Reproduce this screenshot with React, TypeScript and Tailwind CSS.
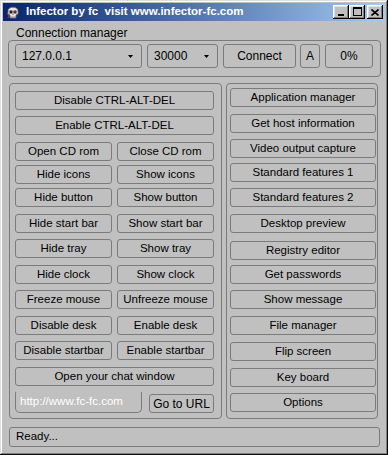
import React from "react";

const btn =
  "flex items-center justify-center h-[19px] border border-[#7b7b7b] rounded-[3px] text-black leading-none";

function Skull() {
  return (
    <svg width="16" height="16" viewBox="0 0 16 16">
      <path d="M3 7 C3 2 13 2 13 7 L13 10 L11 11 L11 14 L5 14 L5 11 L3 10 Z" fill="#e8e8e8" stroke="#6a6a6a" strokeWidth="0.8" />
      <rect x="4.5" y="6.5" width="3" height="3" fill="#202020" />
      <rect x="8.5" y="6.5" width="3" height="3" fill="#202020" />
      <rect x="9" y="7" width="1.5" height="1.5" fill="#c03020" />
      <path d="M7.5 10 L8.5 10 L8 11.5 Z" fill="#202020" />
      <path d="M6 12 L6 14 M8 12 L8 14 M10 12 L10 14" stroke="#707070" strokeWidth="0.7" />
      <path d="M2 9 L4 12 L3 14" stroke="#b04020" strokeWidth="1" fill="none" />
    </svg>
  );
}

function CaptionButton({ children, className = "" }: { children: React.ReactNode; className?: string }) {
  return (
    <div
      className={`w-[16px] h-[14px] bg-[#c0c0c0] flex items-center justify-center shadow-[inset_-1px_-1px_#000,inset_1px_1px_#fff,inset_-2px_-2px_#808080,inset_2px_2px_#dfdfdf] ${className}`}
    >
      {children}
    </div>
  );
}

function Combo({ text, w }: { text: string; w: string }) {
  return (
    <div className={`${w} h-[24px] border border-[#7b7b7b] rounded-[3px] flex items-center pl-[6px] pr-[8px]`}>
      <span className="flex-1">{text}</span>
      <svg width="5" height="3" viewBox="0 0 5 3">
        <path d="M0 0 H5 L2.5 3 Z" fill="#000" />
      </svg>
    </div>
  );
}

const leftRows: { mt: string; items: string[] }[] = [
  { mt: "mt-0", items: ["Disable CTRL-ALT-DEL"] },
  { mt: "mt-[6px]", items: ["Enable CTRL-ALT-DEL"] },
  { mt: "mt-[7px]", items: ["Open CD rom", "Close CD rom"] },
  { mt: "mt-[4px]", items: ["Hide icons", "Show icons"] },
  { mt: "mt-[4px]", items: ["Hide button", "Show button"] },
  { mt: "mt-[7px]", items: ["Hide start bar", "Show start bar"] },
  { mt: "mt-[6px]", items: ["Hide tray", "Show tray"] },
  { mt: "mt-[7px]", items: ["Hide clock", "Show clock"] },
  { mt: "mt-[6px]", items: ["Freeze mouse", "Unfreeze mouse"] },
  { mt: "mt-[7px]", items: ["Disable desk", "Enable desk"] },
  { mt: "mt-[6px]", items: ["Disable startbar", "Enable startbar"] },
  { mt: "mt-[7px]", items: ["Open your chat window"] },
];

const rightRows: { mt: string; label: string }[] = [
  { mt: "mt-0", label: "Application manager" },
  { mt: "mt-[7px]", label: "Get host information" },
  { mt: "mt-[6px]", label: "Video output capture" },
  { mt: "mt-[5px]", label: "Standard features 1" },
  { mt: "mt-[6px]", label: "Standard features 2" },
  { mt: "mt-[7px]", label: "Desktop preview" },
  { mt: "mt-[8px]", label: "Registry editor" },
  { mt: "mt-[5px]", label: "Get passwords" },
  { mt: "mt-[6px]", label: "Show message" },
  { mt: "mt-[7px]", label: "File manager" },
  { mt: "mt-[7px]", label: "Flip screen" },
  { mt: "mt-[7px]", label: "Key board" },
  { mt: "mt-[6px]", label: "Options" },
];

export default function App() {
  return (
    <div className="w-[388px] h-[455px] bg-[#c0c0c0] p-[3px] flex flex-col shadow-[inset_-1px_-1px_#0a0a0a,inset_1px_1px_#dfdfdf,inset_-2px_-2px_#808080,inset_2px_2px_#ffffff] font-['Liberation_Sans',Arial,sans-serif] text-[11.5px] text-black">
      {/* Title bar */}
      <div className="h-[18px] flex items-center bg-linear-to-r from-[#0a246a] to-[#a6caf0] pl-[2px] pr-[2px]">
        <Skull />
        <span className="ml-[5px] font-bold text-white text-[11.5px] whitespace-pre">
          Infector by fc  visit www.infector-fc.com
        </span>
        <div className="ml-auto flex items-center">
          <CaptionButton>
            <div className="w-[6px] h-[2px] bg-black mt-[6px] mr-[1px]" />
          </CaptionButton>
          <CaptionButton>
            <div className="w-[9px] h-[9px] border border-black border-t-2 mb-[1px]" />
          </CaptionButton>
          <CaptionButton className="ml-[2px]">
            <svg width="8" height="7" viewBox="0 0 8 7">
              <path d="M0.5 0.5 L7.5 6.5 M7.5 0.5 L0.5 6.5" stroke="#000" strokeWidth="1.6" />
            </svg>
          </CaptionButton>
        </div>
      </div>

      {/* Connection manager */}
      <div className="mt-[6px] h-[13px] pl-[13px] leading-[13px] text-[12px]">Connection manager</div>
      <div className="ml-[5px] w-[373px] h-[37px] border border-[#7b7b7b] rounded-[4px] pt-[3px] pl-[6px] flex gap-[5px] text-[12px]">
        <Combo text="127.0.0.1" w="w-[127px]" />
        <Combo text="30000" w="w-[71px]" />
        <div className={`${btn} w-[73px] h-[24px]`}>Connect</div>
        <div className={`${btn} w-[20px] h-[24px] -ml-[1px]`}>A</div>
        <div className={`${btn} w-[48px] h-[24px] text-[#555]`}>0%</div>
      </div>

      {/* Main groups */}
      <div className="mt-[6px] ml-[6px] flex gap-[4px]">
        <div className="w-[213px] h-[336px] border border-[#7b7b7b] rounded-[4px] pt-[7px] pl-[5px] flex flex-col">
          {leftRows.map((row) => (
            <div key={row.items[0]} className={`${row.mt} flex gap-[5px] w-[199px]`}>
              {row.items.map((t) => (
                <div key={t} className={`${btn} flex-1`}>
                  {t}
                </div>
              ))}
            </div>
          ))}
          <div className="mt-[5px] flex items-center w-[199px]">
            <div className="w-[127px] h-[22px] border-x border-b border-[#7b7b7b] rounded-b-[5px] rounded-t-[2px] border-t border-t-transparent text-white pl-[4px] pt-[4px] leading-none">
              http://www.fc-fc.com
            </div>
            <div className={`${btn} w-[65px] ml-auto mt-[3px] text-[12px]`}>Go to URL</div>
          </div>
        </div>

        <div className="w-[152px] h-[336px] border border-[#7b7b7b] rounded-[4px] pt-[4px] pl-[3px] flex flex-col">
          {rightRows.map((row) => (
            <div key={row.label} className={`${row.mt} ${btn} w-[146px]`}>
              {row.label}
            </div>
          ))}
        </div>
      </div>

      {/* Status bar */}
      <div className="mt-[8px] ml-[6px] w-[371px] h-[20px] border border-[#7b7b7b] rounded-[3px] pl-[6px] flex items-center">
        Ready...
      </div>
    </div>
  );
}
